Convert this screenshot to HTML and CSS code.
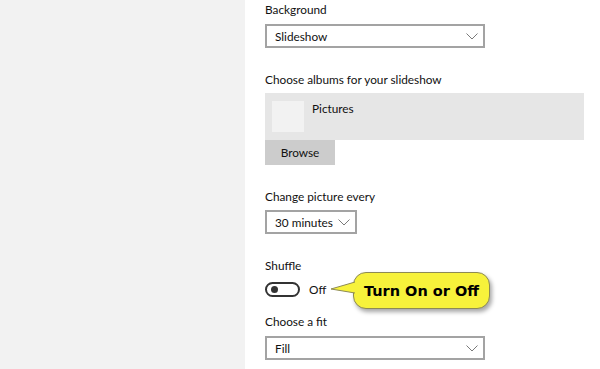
FILE: index.html
```html
<!DOCTYPE html>
<html lang="en">

<head>
    <meta charset="UTF-8">
    <title>Background Settings</title>
    <link rel="stylesheet" href="styles.css">
</head>

<body>
    <div class="sidebar"></div>
    <div class="main">
        <p class="label">Background</p>
        <div class="select wide">
            <span>Slideshow</span>
            <svg class="chevron" width="12" height="7" viewBox="0 0 12 7"><path d="M0.5 0.5 L6 6 L11.5 0.5" fill="none" stroke="#7a7a7a" stroke-width="1"/></svg>
        </div>

        <p class="label gap">Choose albums for your slideshow</p>
        <div class="album">
            <div class="thumb"></div>
            <span class="album-name">Pictures</span>
        </div>
        <button class="browse">Browse</button>

        <p class="label gap">Change picture every</p>
        <div class="select narrow">
            <span>30 minutes</span>
            <svg class="chevron" width="12" height="7" viewBox="0 0 12 7"><path d="M0.5 0.5 L6 6 L11.5 0.5" fill="none" stroke="#7a7a7a" stroke-width="1"/></svg>
        </div>

        <p class="label gap">Shuffle</p>
        <div class="toggle-row">
            <div class="toggle"><div class="knob"></div></div>
            <span class="state">Off</span>
            <div class="callout">
                <svg class="pointer" width="26" height="16" viewBox="0 0 26 16"><path d="M25 2 L1 9 L25 13" fill="#f7f23b" stroke="#8d8a55" stroke-width="1"/></svg>
                Turn On or Off
            </div>
        </div>

        <p class="label fit">Choose a fit</p>
        <div class="select wide">
            <span>Fill</span>
            <svg class="chevron" width="12" height="7" viewBox="0 0 12 7"><path d="M0.5 0.5 L6 6 L11.5 0.5" fill="none" stroke="#7a7a7a" stroke-width="1"/></svg>
        </div>
    </div>
</body>

</html>
```

FILE: styles.css
```css
body {
    margin: 0;
    padding: 0;
    display: flex;
    height: 369px;
    overflow: hidden;
    background: #fff;
    font-family: Lato, "Noto Sans", sans-serif;
    font-size: 11.8px;
    color: #111;
}

.sidebar {
    width: 245px;
    flex-shrink: 0;
    background-color: #f2f2f2;
}

.main {
    padding-left: 20px;
    padding-top: 1px;
    flex: 1;
}

.label {
    margin: 0 0 5px 0;
    line-height: 18px;
    white-space: nowrap;
}

.label.gap {
    margin-top: 23px;
    margin-bottom: 4px;
}

.label.fit {
    margin-top: 14px;
    margin-bottom: 5px;
}

.select {
    box-sizing: border-box;
    height: 24px;
    border: 2px solid #a3a3a3;
    display: flex;
    align-items: center;
    justify-content: space-between;
    padding: 0 5px 0 8px;
    white-space: nowrap;
}

.select.wide {
    width: 220px;
}

.select.narrow {
    width: 92px;
    margin-top: 2px;
}

.chevron {
    display: block;
}

.album {
    width: 319px;
    height: 47px;
    background-color: #e6e6e6;
    display: flex;
    align-items: flex-start;
    box-sizing: border-box;
    padding: 8px 7px;
}

.thumb {
    width: 32px;
    height: 31px;
    background-color: #f2f2f2;
}

.album-name {
    margin-left: 8px;
    line-height: 16px;
}

.browse {
    display: block;
    width: 70px;
    height: 25px;
    border: none;
    margin: 0;
    padding: 0;
    background-color: #cccccc;
    font-family: inherit;
    font-size: 11.8px;
    color: #111;
}

.toggle-row {
    position: relative;
    display: flex;
    align-items: center;
    height: 20px;
    margin-top: 2px;
}

.toggle {
    box-sizing: border-box;
    width: 35px;
    height: 15px;
    border: 2px solid #333;
    border-radius: 8px;
    display: flex;
    align-items: center;
    padding-left: 4px;
}

.knob {
    width: 7px;
    height: 7px;
    border-radius: 50%;
    background-color: #333;
}

.state {
    margin-left: 9px;
}

.callout {
    position: absolute;
    left: 88px;
    top: -7px;
    width: 137px;
    height: 37px;
    box-sizing: border-box;
    background-color: #f7f23b;
    border: 1px solid #8d8a55;
    border-radius: 13px;
    box-shadow: 2px 3px 4px rgba(0, 0, 0, 0.35);
    font-family: "DejaVu Sans", sans-serif;
    font-weight: bold;
    font-size: 14.5px;
    color: #000;
    display: flex;
    align-items: center;
    justify-content: center;
}

.pointer {
    position: absolute;
    left: -24px;
    top: 7px;
}
```
